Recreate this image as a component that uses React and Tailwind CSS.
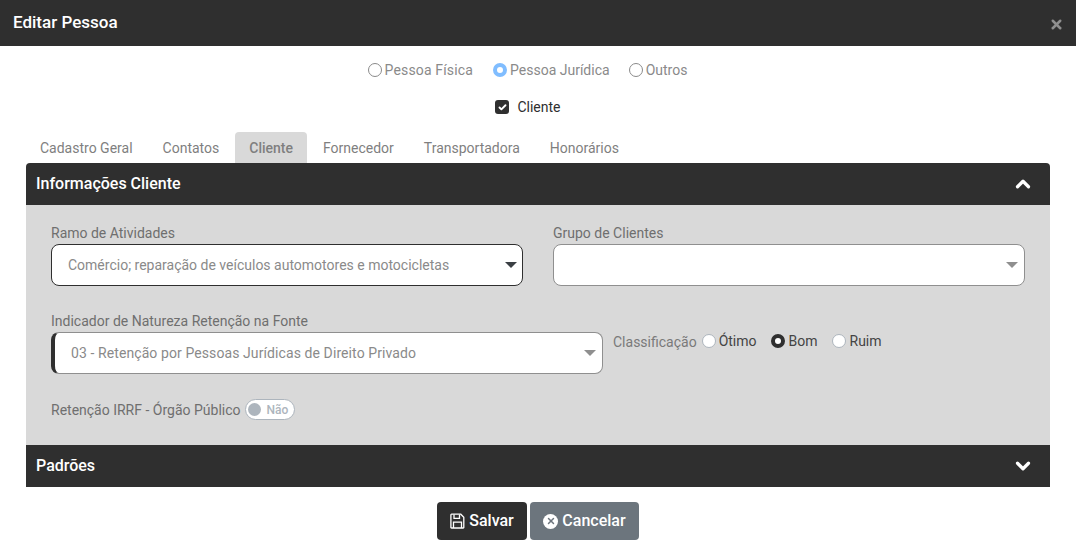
import React from 'react';
import { X, ChevronUp, ChevronDown, Check } from 'lucide-react';

const Radio = ({ label, checked, textClass = 'text-[#8a8a8a]', tone = 'blue', className = '', labelClass = 'ml-[3px]' }) => (
  <label className={`flex items-center ${className}`}>
    {checked ? (
      tone === 'blue' ? (
        <span className="w-[14px] h-[14px] rounded-full bg-white border-[4px] border-[#80bdff]" />
      ) : (
        <span className="w-[14px] h-[14px] rounded-full bg-white border-[4px] border-[#2f2f2f]" />
      )
    ) : tone === 'blue' ? (
      <span className="w-[14px] h-[14px] rounded-full bg-white border border-[#8a8a8a]" />
    ) : (
      <span className="w-[14px] h-[14px] rounded-full bg-white border border-[#adb5bd]" />
    )}
    <span className={`${labelClass} text-[14px] leading-[20px] ${textClass}`}>{label}</span>
  </label>
);

const Caret = ({ dark }) => (
  <svg width="12" height="6" viewBox="0 0 12 6" className={dark ? 'text-[#3a3f44]' : 'text-[#8f8f8f]'}>
    <path d="M0 0h12L6 6z" fill="currentColor" />
  </svg>
);

const SaveIcon = () => (
  <svg width="15" height="16" viewBox="0 0 15 16" fill="none" stroke="currentColor" strokeWidth="1.3">
    <path d="M1.5 1.2h9.3l3 3v10.2a.6.6 0 0 1-.6.6H1.5a.6.6 0 0 1-.6-.6V1.8a.6.6 0 0 1 .6-.6z" />
    <path d="M4 1.5v3.8h5.5V1.5" />
    <path d="M3.5 15V9.2h8V15" />
  </svg>
);

const tabs = [
  { label: 'Cadastro Geral', cls: 'pl-[14px] pr-[15px]' },
  { label: 'Contatos', cls: 'pl-[15px] pr-[16px]' },
  { label: 'Cliente', active: true },
  { label: 'Fornecedor', cls: 'pl-[16px] pr-[15px]' },
  { label: 'Transportadora', cls: 'px-[15px]' },
  { label: 'Honorários', cls: 'px-[15px]' },
];

export default function App() {
  return (
    <div className="w-[1076px] h-[545px] overflow-hidden bg-white font-['Roboto',sans-serif] text-[14px]">
      <div className="h-[46px] bg-[#2f2f2f] flex items-center justify-between pl-[13px] pr-[12px]">
        <h5 className="text-white text-[17px] font-medium">Editar Pessoa</h5>
        <X size={15} strokeWidth={4} className="text-[#8f8f8f] mt-[3px]" />
      </div>

      <div className="flex justify-center items-start gap-[20px] pt-[14px] h-[44px] pr-[21px]">
        <Radio label="Pessoa Física" textClass="text-[#8a8a8a] tracking-[0.15px]" />
        <Radio label="Pessoa Jurídica" checked />
        <Radio label="Outros" className="-ml-[1px]" />
      </div>

      <div className="flex justify-center items-center h-[20px] mt-[7px] pr-[20px]">
        <span className="w-[14px] h-[14px] rounded-[3px] bg-[#2f2f2f] flex items-center justify-center">
          <Check size={9} strokeWidth={5} className="text-white" />
        </span>
        <span className="ml-[8px] text-[#2f2f2f]">Cliente</span>
      </div>

      <div className="flex mt-[15px] ml-[26px] h-[31px]">
        {tabs.map(t => (
          <div
            key={t.label}
            className={
              t.active
                ? 'px-[14px] flex items-center rounded-t-[4px] bg-[#d9d9d9] text-[#7f7f7f] font-medium pt-[1px]'
                : `${t.cls} flex items-center text-[#7f7f7f] pt-[1px]`
            }
          >
            {t.label}
          </div>
        ))}
      </div>

      <div className="mx-[26px]">
        <div className="h-[42px] bg-[#2f2f2f] rounded-t-[4px] flex items-center justify-between pl-[10px] pr-[16px]">
          <span className="text-white text-[16px] font-medium">Informações Cliente</span>
          <ChevronUp size={22} strokeWidth={3.5} className="text-white" />
        </div>

        <div className="h-[240px] bg-[#d9d9d9] pl-[25px] pr-[25px] pt-[18px]">
          <div className="flex gap-[30px]">
            <div className="w-[472px]">
              <div className="text-[#6f6f6f] leading-[20px] mb-[1px]">Ramo de Atividades</div>
              <div className="h-[42px] bg-white border border-[#2f2f2f] rounded-[8px] flex items-center justify-between pl-[16px] pr-[5px]">
                <span className="text-[#8a8a8a]">Comércio; reparação de veículos automotores e motocicletas</span>
                <Caret dark />
              </div>
            </div>
            <div className="w-[472px]">
              <div className="text-[#6f6f6f] leading-[20px] mb-[1px]">Grupo de Clientes</div>
              <div className="h-[42px] bg-white border border-[#8f8f8f] rounded-[8px] flex items-center justify-end pr-[6px]">
                <Caret />
              </div>
            </div>
          </div>

          <div className="flex mt-[25px]">
            <div className="w-[552px]">
              <div className="text-[#6f6f6f] leading-[20px] mb-[1px]">Indicador de Natureza Retenção na Fonte</div>
              <div className="h-[42px] bg-white border border-[#8f8f8f] border-l-[4px] border-l-[#2f2f2f] rounded-[8px] flex items-center justify-between pl-[16px] pr-[6px]">
                <span className="text-[#8a8a8a] tracking-[0.09px]">03 - Retenção por Pessoas Jurídicas de Direito Privado</span>
                <Caret />
              </div>
            </div>
            <div className="flex items-start ml-[10px] pt-[20px]">
              <span className="text-[#7a7a7a] leading-[20px] mt-[1px] mr-[5px]">Classificação</span>
              <div className="flex gap-[14px]">
                <Radio label="Ótimo" textClass="text-[#444]" tone="dark" />
                <Radio label="Bom" checked textClass="text-[#444]" tone="dark" labelClass="ml-[4px]" />
                <Radio label="Ruim" textClass="text-[#444]" tone="dark" labelClass="ml-[4px]" />
              </div>
            </div>
          </div>

          <div className="flex items-center mt-[25px]">
            <span className="text-[#6f6f6f] leading-[20px]">Retenção IRRF - Órgão Público</span>
            <div className="ml-[4px] w-[50px] h-[21px] bg-white border border-[#adb5bd] rounded-full flex items-center pl-[2px]">
              <span className="w-[13px] h-[13px] rounded-full bg-[#adb5bd]" />
              <span className="ml-[6px] text-[12px] text-[#adb5bd] font-medium">Não</span>
            </div>
          </div>
        </div>

        <div className="h-[42px] bg-[#2f2f2f] flex items-center justify-between pl-[10px] pr-[16px]">
          <span className="text-white text-[16px] font-medium">Padrões</span>
          <ChevronDown size={22} strokeWidth={3.5} className="text-white" />
        </div>
      </div>

      <div className="flex justify-center gap-[3px] mt-[15px]">
        <button className="w-[90px] h-[38px] bg-[#2f2f2f] rounded-[4px] flex items-center justify-center gap-[4px] text-white text-[16px] font-medium">
          <SaveIcon />
          Salvar
        </button>
        <button className="w-[109px] h-[38px] bg-[#6c757d] rounded-[4px] flex items-center justify-center gap-[4px] text-white text-[16px] font-medium">
          <span className="w-[15px] h-[15px] rounded-full bg-white flex items-center justify-center">
            <X size={10} strokeWidth={3.5} className="text-[#6c757d]" />
          </span>
          Cancelar
        </button>
      </div>
    </div>
  );
}
